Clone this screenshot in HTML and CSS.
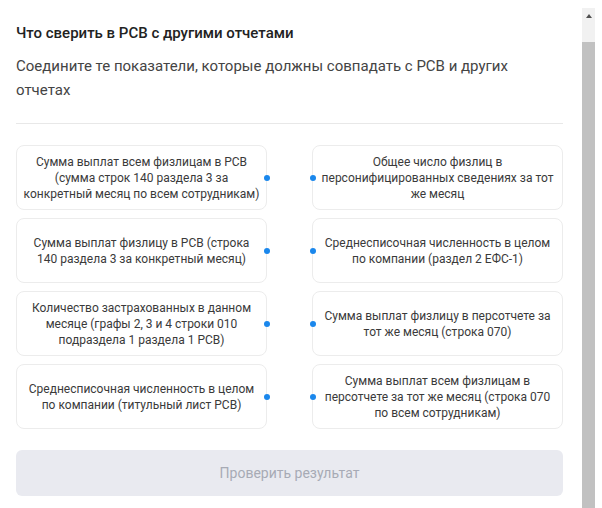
FILE: index.html
```html
<!DOCTYPE html>
<html lang="ru">
<head>
<meta charset="utf-8">
<link rel="stylesheet" href="styles.css">
</head>
<body>
<div class="page">
  <div class="content">
    <h1 class="title">Что сверить в РСВ с другими отчетами</h1>
    <p class="subtitle">Соедините те показатели, которые должны совпадать с РСВ и других отчетах</p>
    <div class="divider"></div>
    <div class="grid">
      <div class="card left"><span>Сумма выплат всем физлицам в РСВ (сумма строк 140 раздела 3 за конкретный месяц по всем сотрудникам)</span><i class="dot"></i></div>
      <div class="card right"><i class="dot"></i><span>Общее число физлиц в персонифицированных сведениях за тот же месяц</span></div>
      <div class="card left"><span>Сумма выплат физлицу в РСВ (строка 140 раздела 3 за конкретный месяц)</span><i class="dot"></i></div>
      <div class="card right"><i class="dot"></i><span>Среднесписочная численность в целом по компании (раздел 2 ЕФС-1)</span></div>
      <div class="card left"><span>Количество застрахованных в данном месяце (графы 2, 3 и 4 строки 010 подраздела 1 раздела 1 РСВ)</span><i class="dot"></i></div>
      <div class="card right"><i class="dot"></i><span>Сумма выплат физлицу в персотчете за тот же месяц (строка 070)</span></div>
      <div class="card left"><span>Среднесписочная численность в целом по компании (титульный лист РСВ)</span><i class="dot"></i></div>
      <div class="card right"><i class="dot"></i><span>Сумма выплат всем физлицам в персотчете за тот же месяц (строка 070 по всем сотрудникам)</span></div>
    </div>
    <button class="check" type="button">Проверить результат</button>
  </div>
  <div class="scrollbar">
    <div class="sb-btn"><i class="sb-arrow"></i></div>
    <div class="sb-thumb"></div>
  </div>
</div>
</body>
</html>
```
FILE: styles.css
```css
* { box-sizing: border-box; }
html, body { margin: 0; padding: 0; background: #fff; }
body { font-family: Roboto, "Liberation Sans", sans-serif; color: #333; }
.page { display: flex; height: 508px; overflow: hidden; }
.content { width: 582px; padding: 23px 19px 0 16px; }
.title { margin: 0; font-size: 15px; line-height: 20px; font-weight: 500; color: #222; }
.subtitle { margin: 11px 0 0; font-size: 15px; line-height: 24px; color: #444; }
.divider { margin-top: 21px; height: 1px; background: #e8e8e8; }
.grid { margin-top: 21px; display: grid; grid-template-columns: 251px 251px; grid-auto-rows: 65px; column-gap: 45px; row-gap: 8px; }
.card { position: relative; display: flex; align-items: center; justify-content: center; border: 1px solid #ececec; border-radius: 8px; padding: 0 6px; text-align: center; font-size: 12px; line-height: 16px; color: #3a3a3a; }
.dot { position: absolute; top: 50%; width: 6px; height: 6px; margin-top: -3px; border-radius: 50%; background: #1a87ec; }
.left .dot { right: -4px; }
.right .dot { left: -3px; }
.check { display: block; width: 547px; height: 46px; margin-top: 21px; border: 0; border-radius: 6px; background: #e9eaf0; color: #a7aab5; font-family: Roboto, "Liberation Sans", sans-serif; font-size: 14px; }
.scrollbar { width: 13px; margin-top: 8px; display: flex; flex-direction: column; }
.sb-btn { height: 34px; background: #f1f1f1; display: flex; justify-content: center; padding-top: 6px; }
.sb-arrow { width: 0; height: 0; border-left: 3.5px solid transparent; border-right: 3.5px solid transparent; border-bottom: 4px solid #505050; }
.sb-thumb { flex: 1; background: #c1c1c1; }
```
